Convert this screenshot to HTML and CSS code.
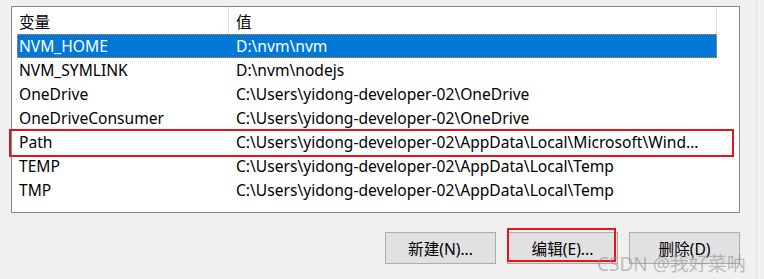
FILE: index.html
```html
<!DOCTYPE html>
<html lang="zh-CN">
<head>
  <meta charset="UTF-8" />
  <title>环境变量</title>
  <link rel="stylesheet" href="styles.css">
</head>
<body>
  <div class="panel">
    <div class="list-box">
      <div class="list-head">
        <div class="col name">变量</div>
        <div class="col value">值</div>
      </div>
      <div class="row selected">
        <div class="col name">NVM_HOME</div>
        <div class="col value">D:\nvm\nvm</div>
      </div>
      <div class="row">
        <div class="col name">NVM_SYMLINK</div>
        <div class="col value">D:\nvm\nodejs</div>
      </div>
      <div class="row">
        <div class="col name">OneDrive</div>
        <div class="col value">C:\Users\yidong-developer-02\OneDrive</div>
      </div>
      <div class="row">
        <div class="col name">OneDriveConsumer</div>
        <div class="col value">C:\Users\yidong-developer-02\OneDrive</div>
      </div>
      <div class="row">
        <div class="col name">Path</div>
        <div class="col value">C:\Users\yidong-developer-02\AppData\Local\Microsoft\Wind...</div>
      </div>
      <div class="row">
        <div class="col name">TEMP</div>
        <div class="col value">C:\Users\yidong-developer-02\AppData\Local\Temp</div>
      </div>
      <div class="row">
        <div class="col name">TMP</div>
        <div class="col value">C:\Users\yidong-developer-02\AppData\Local\Temp</div>
      </div>
    </div>

    <div class="actions">
      <button class="btn">新建(N)...</button>
      <button class="btn">编辑(E)...</button>
      <button class="btn">删除(D)</button>
    </div>
  </div>

  <div class="mark mark-path"></div>
  <div class="mark mark-edit"></div>
  <div class="watermark">CSDN @我好菜呐</div>
  <div class="edge"></div>
</body>
</html>
```

FILE: styles.css
```css
* {
  box-sizing: border-box;
  margin: 0;
  padding: 0;
}

body {
  background-color: #f0f0f0;
  font-family: 'Noto Sans', 'Noto Sans CJK SC', sans-serif;
  font-size: 15.6px;
  color: #000;
  width: 764px;
  height: 279px;
  overflow: hidden;
  position: relative;
}

.panel {
  padding: 6px 0 0 11px;
}

.list-box {
  width: 729px;
  height: 207px;
  background: #fff;
  border: 1px solid #828790;
  padding-left: 5px;
}

.list-head,
.row {
  display: grid;
  grid-template-columns: 212px 488px;
  width: 700px;
  align-items: center;
}

.list-head {
  height: 27px;
}

.list-head .col {
  border-right: 1px solid #e5e5e5;
  height: 27px;
  padding-top: 2px;
}

.row {
  height: 24px;
}

.col {
  white-space: nowrap;
  display: flex;
  align-items: center;
}

.col.name {
  padding-left: 2px;
}

.col.value {
  padding-left: 7px;
}

.row.selected {
  background: #0078d7;
  color: #fff;
  outline: 1px dotted #f08c1c;
  outline-offset: -1px;
}

.actions {
  display: flex;
  gap: 11px;
  margin: 19px 0 0 374px;
}

.btn {
  width: 111px;
  height: 32px;
  background: #e1e1e1;
  border: 1px solid #adadad;
  font-family: 'Noto Sans', 'Noto Sans CJK SC', sans-serif;
  font-size: 15.6px;
  color: #000;
}

.mark {
  position: absolute;
  border: 2px solid #e8141c;
}

.mark-path {
  left: 9px;
  top: 129px;
  width: 725px;
  height: 28px;
}

.mark-edit {
  left: 507px;
  top: 228px;
  width: 109px;
  height: 34px;
}

.watermark {
  position: absolute;
  left: 597px;
  top: 249px;
  font-size: 19px;
  color: rgba(140, 140, 140, 0.55);
  white-space: nowrap;
}

.edge {
  position: absolute;
  left: 756px;
  top: 0;
  width: 1px;
  height: 279px;
  background: #e2e2e2;
}
```
